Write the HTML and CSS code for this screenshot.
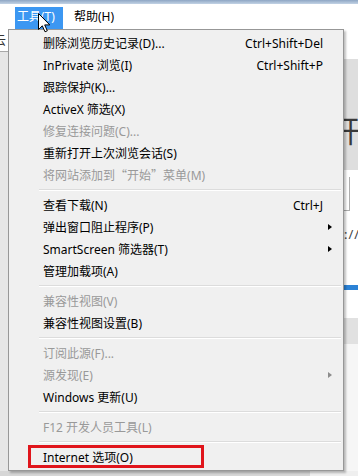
FILE: index.html
```html
<!DOCTYPE html>
<html lang="zh-CN">
  <head>
    <meta charset="UTF-8" />
    <title>工具菜单</title>
    <link rel="stylesheet" href="styles.css">
  </head>
  <body>
    <div class="window">
      <div class="titlebar"></div>
      <nav class="menubar">
        <span class="menubar-item active">工具(T)</span>
        <span class="menubar-item">帮助(H)</span>
      </nav>

      <div class="page">
        <div class="page-left">
          <div class="left-tab"><span>云</span></div>
          <div class="left-fill"></div>
        </div>
        <div class="page-mid"></div>
        <div class="page-right">
          <div class="pr-top"></div>
          <div class="pr-banner"><span>开</span></div>
          <div class="pr-form">
            <div class="pr-input"></div>
            <div class="pr-url">://</div>
          </div>
          <div class="pr-progress"></div>
          <div class="pr-gap"></div>
          <div class="pr-bar"></div>
          <div class="pr-rest"></div>
        </div>
      </div>
      <div class="bottom-strip">
        <div class="bs-dark"></div>
        <div class="bs-light"></div>
      </div>

      <ul class="menu">
        <li class="item"><span class="label">删除浏览历史记录(D)...</span><span class="key">Ctrl+Shift+Del</span><span class="sub"></span></li>
        <li class="item"><span class="label">InPrivate 浏览(I)</span><span class="key">Ctrl+Shift+P</span><span class="sub"></span></li>
        <li class="item"><span class="label">跟踪保护(K)...</span><span class="sub"></span></li>
        <li class="item"><span class="label">ActiveX 筛选(X)</span><span class="sub"></span></li>
        <li class="item disabled"><span class="label">修复连接问题(C)...</span><span class="sub"></span></li>
        <li class="item"><span class="label">重新打开上次浏览会话(S)</span><span class="sub"></span></li>
        <li class="item disabled"><span class="label">将网站添加到<span class="cjk">“</span>开始<span class="cjk">”</span>菜单(M)</span><span class="sub"></span></li>
        <li class="sep"></li>
        <li class="item"><span class="label">查看下载(N)</span><span class="key">Ctrl+J</span><span class="sub"></span></li>
        <li class="item"><span class="label">弹出窗口阻止程序(P)</span><span class="sub"><i class="arrow"></i></span></li>
        <li class="item"><span class="label">SmartScreen 筛选器(T)</span><span class="sub"><i class="arrow"></i></span></li>
        <li class="item"><span class="label">管理加载项(A)</span><span class="sub"></span></li>
        <li class="sep"></li>
        <li class="item disabled"><span class="label">兼容性视图(V)</span><span class="sub"></span></li>
        <li class="item"><span class="label">兼容性视图设置(B)</span><span class="sub"></span></li>
        <li class="sep"></li>
        <li class="item disabled"><span class="label">订阅此源(F)...</span><span class="sub"></span></li>
        <li class="item disabled"><span class="label">源发现(E)</span><span class="sub"><i class="arrow"></i></span></li>
        <li class="item"><span class="label">Windows 更新(U)</span><span class="sub"></span></li>
        <li class="sep"></li>
        <li class="item disabled"><span class="label">F12 开发人员工具(L)</span><span class="sub"></span></li>
        <li class="sep"></li>
        <li class="item"><span class="label">Internet 选项(O)</span><span class="sub"></span></li>
      </ul>

      <div class="mark"></div>

      <svg class="cursor" width="13" height="20" viewBox="0 0 13 20">
        <path d="M0.5 0.5 L0.5 16.5 L4.3 12.8 L7 18.8 L9.3 17.8 L6.7 11.9 L11.8 11.9 Z" fill="#fff" stroke="#000" stroke-width="1" stroke-linejoin="miter" />
      </svg>
    </div>
  </body>
</html>
```

FILE: styles.css
```css
* {
  box-sizing: border-box;
}

body {
  margin: 0;
  padding: 0;
  background: #fff;
  font-family: "Noto Sans", "Noto Sans CJK SC", sans-serif;
  font-size: 12px;
  color: #000;
}

.window {
  position: relative;
  width: 358px;
  height: 476px;
  overflow: hidden;
  display: flex;
  flex-direction: column;
}

.titlebar {
  height: 4px;
  background: linear-gradient(#8ea6c4, #c3d3e5);
}

.menubar {
  height: 25px;
  background: #fff;
  display: flex;
  align-items: flex-end;
  padding-left: 15px;
}

.menubar-item {
  height: 22px;
  line-height: 20px;
  padding: 0 9px 0 2px;
  margin-right: 1px;
  white-space: nowrap;
}

.menubar-item.active {
  width: 48px;
  background: #3c97f2;
  color: #fff;
  margin-right: 9px;
}

/* page behind the dropdown */
.page {
  height: 442px;
  display: flex;
}

.page-left {
  width: 8px;
  display: flex;
  flex-direction: column;
}

.left-tab {
  height: 23px;
  background: #fff;
  border-bottom: 1px solid #a8a8a8;
  overflow: hidden;
  line-height: 22px;
  color: #333;
}

.left-tab span {
  display: block;
  margin-left: -6px;
  padding-top: 1px;
}

.left-fill {
  flex: 1;
  background: #e6e6e6;
}

.page-mid {
  flex: 1;
  background: #f0f0f0;
}

.page-right {
  width: 14px;
  display: flex;
  flex-direction: column;
}

.pr-top {
  height: 30px;
  background: #fff;
}

.pr-banner {
  height: 111px;
  background: #dedede;
  overflow: hidden;
  color: #3a3a3a;
  font-family: "Noto Sans CJK SC", sans-serif;
  font-size: 30px;
  line-height: 30px;
}

.pr-banner span {
  display: block;
  margin: 55px 0 0 -14px;
}

.pr-form {
  height: 115px;
  background: #fff;
  overflow: hidden;
}

.pr-input {
  width: 6px;
  height: 34px;
  margin-top: 7px;
  border-right: 1px solid #adadad;
  border-bottom: 1px solid #adadad;
}

.pr-url {
  margin-top: 14px;
  font-size: 13px;
  color: #444;
  letter-spacing: 1px;
  white-space: nowrap;
}

.pr-progress {
  height: 5px;
  background: #2b82d6;
}

.pr-gap {
  height: 28px;
  background: #fff;
}

.pr-bar {
  height: 26px;
  background: #e1e1e1;
}

.pr-rest {
  flex: 1;
  background: #f6f6f6;
}

.bottom-strip {
  height: 5px;
  display: flex;
}

.bs-dark {
  width: 310px;
  background: #d6d6d6;
}

.bs-light {
  flex: 1;
  background: #efefef;
}

/* dropdown menu */
.menu {
  position: absolute;
  left: 8px;
  top: 29px;
  width: 336px;
  height: 442px;
  margin: 0;
  padding: 2px;
  list-style: none;
  background: #f0f0f0;
  border: 1px solid #979797;
  box-shadow: 2px 2px 2px rgba(0, 0, 0, 0.25);
}

.item {
  height: 22px;
  display: flex;
  align-items: center;
  padding-left: 32px;
  white-space: nowrap;
}

.item .label {
  flex: 1;
}

.cjk {
  font-family: "Noto Sans CJK SC", sans-serif;
}

.item.disabled {
  color: #999;
}

.key {
  text-align: right;
}

.sub {
  width: 18px;
  height: 22px;
  display: flex;
  align-items: center;
  padding-left: 5px;
}

.arrow {
  width: 0;
  height: 0;
  border-left: 4px solid #000;
  border-top: 3.5px solid transparent;
  border-bottom: 3.5px solid transparent;
}

.disabled .arrow {
  border-left-color: #8c8c8c;
}

.sep {
  height: 8px;
  margin-left: 28px;
  padding-top: 3px;
}

.sep::before {
  content: "";
  display: block;
  height: 1px;
  background: #dcdcdc;
  border-bottom: 1px solid #fff;
  box-sizing: content-box;
}

/* red annotation box */
.mark {
  position: absolute;
  left: 28px;
  top: 445px;
  width: 176px;
  height: 23px;
  border: 3px solid #e0151b;
}

.cursor {
  position: absolute;
  left: 38px;
  top: 13px;
}
```
